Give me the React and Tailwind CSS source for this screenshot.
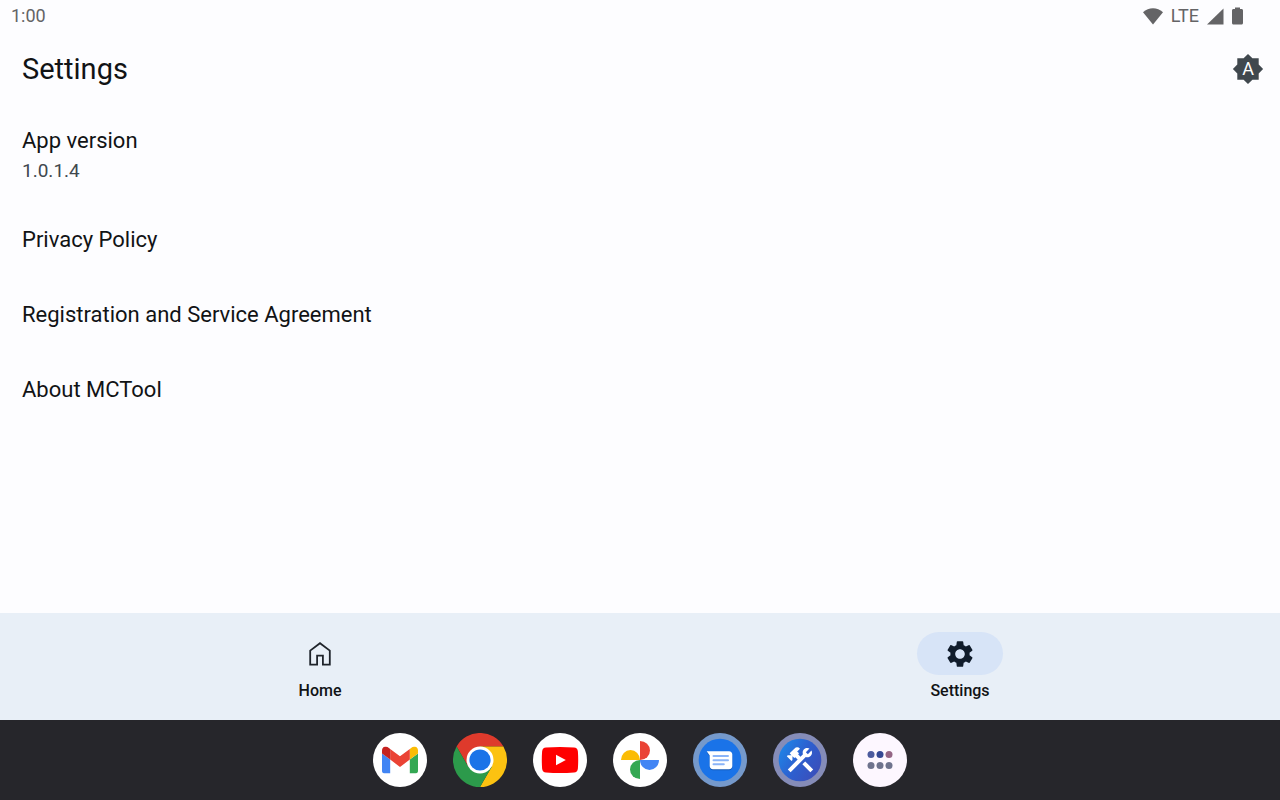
import React from 'react';
import { MdConstruction, MdSettings } from 'react-icons/md';

const links = ['Privacy Policy', 'Registration and Service Agreement', 'About MCTool'];

const StatusBar = () => (
    <div className="flex h-8 items-center justify-between pl-[11px] pr-9 text-[#646466]">
        <span className="text-lg leading-8">1:00</span>
        <div className="flex items-center gap-2">
            <svg width="20" height="17" viewBox="0 0 20 17" fill="currentColor" aria-hidden="true">
                <path d="M0 4.2C3 1.6 6.3 0.3 10 0.3s7 1.3 10 3.9L10 16.6z" />
            </svg>
            <span className="text-lg leading-8">LTE</span>
            <svg width="17" height="17" viewBox="0 0 17 17" fill="currentColor" aria-hidden="true">
                <path d="M16.5 0.5v16H0z" />
            </svg>
            <svg width="12" height="18" viewBox="0 0 12 18" fill="currentColor" aria-hidden="true">
                <path d="M3 2V0.500h5V2h1.500c0.900 0 1.500 0.600 1.500 1.500v12.500c0 0.900-0.600 1.500-1.500 1.500h-8C0.600 17.500 0 16.900 0 16V3.500C0 2.600 0.600 2 1.500 2z" />
            </svg>
        </div>
    </div>
);

const BrightnessIcon = () => (
    <svg width="32" height="32" viewBox="0 0 32 32" aria-hidden="true">
        <path fill="#40484e" d="M26.700 11.600V5.300h-6.300L16 0.900l-4.400 4.400H5.300v6.300L0.900 16l4.400 4.400v6.300h6.300l4.400 4.400 4.400-4.400h6.300v-6.300l4.400-4.400z" />
        <text x="16" y="22" textAnchor="middle" fontSize="18" fill="#fff">A</text>
    </svg>
);

const HomeIcon = () => (
    <svg width="24" height="26" viewBox="0 0 24 26" fill="none" stroke="#1f242b" strokeWidth="1.8" aria-hidden="true">
        <path d="M2.200 23.700V9.600L12 2.200l9.800 7.400v14.100h-6.900v-9H9.100v9z" />
    </svg>
);

const Gmail = () => (
    <svg width="54" height="54" viewBox="0 0 54 54" aria-hidden="true">
        <circle cx="27" cy="27" r="27" fill="#fff" />
        <svg x="9" y="13.500" width="36" height="27" viewBox="52 42 88 66">
            <path fill="#4285f4" d="M58 108h14V74L52 59v43c0 3.320 2.690 6 6 6" />
            <path fill="#34a853" d="M120 108h14c3.320 0 6-2.690 6-6V59l-20 15" />
            <path fill="#fbbc04" d="M120 48v26l20-15v-8c0-7.420-8.470-11.650-14.400-7.200" />
            <path fill="#ea4335" d="M72 74V48l24 18 24-18v26L96 92" />
            <path fill="#c5221f" d="M52 51v8l20 15V48l-5.600-4.200c-5.940-4.450-14.400-.22-14.400 7.200" />
        </svg>
    </svg>
);

const Chrome = () => (
    <svg width="54" height="54" viewBox="-27 -27 54 54" aria-hidden="true">
        <path fill="#de3a2c" d="M-23.400-13.500A27 27 0 0 1 23.400-13.500H0L0 0l-11.700 6.750z" />
        <path fill="#fcc211" d="M23.400-13.500A27 27 0 0 1 0 27L11.700 6.750 0 0v-13.500z" />
        <path fill="#2c9a4b" d="M0 27A27 27 0 0 1-23.400-13.500L-11.700 6.750 0 0l11.700 6.750z" />
        <circle r="13.500" fill="#fff" />
        <circle r="10.600" fill="#1a73e8" />
    </svg>
);

const YouTube = () => (
    <svg width="54" height="54" viewBox="-27 -27 54 54" aria-hidden="true">
        <circle r="27" fill="#fff" />
        <path fill="#f00" d="M-14-12.500Q0-13.500 14-12.500 17.500-12.300 17.900-8.500 18.500 0 17.900 8.500 17.500 12.300 14 12.600 0 13.600-14 12.600-17.500 12.300-17.900 8.500-18.500 0-17.900-8.500-17.500-12.300-14-12.500z" />
        <path fill="#fff" d="M-4-5.200L5.800 0-4 5.300z" />
    </svg>
);

const Photos = () => (
    <svg width="54" height="54" viewBox="-27 -27 54 54" aria-hidden="true">
        <circle r="27" fill="#fff" />
        <path fill="#ea4335" d="M0 0v-19a10 9.500 0 0 1 0 19z" />
        <path fill="#fbbc04" d="M0 0h-19a9.500 10 0 0 1 19 0z" />
        <path fill="#34a853" d="M0 0v19a10 9.500 0 0 1 0-19z" />
        <path fill="#4285f4" d="M0 0h19a9.500 10 0 0 1-19 0z" />
    </svg>
);

const Messages = () => (
    <svg width="54" height="54" viewBox="-27 -27 54 54" aria-hidden="true">
        <circle r="27" fill="#7599cb" />
        <circle r="21.300" fill="#1a73e8" />
        <path fill="#1558b5" d="M-13.300-7.700H9c2 0 3.300 1.300 3.300 3.200V7c0 2-1.300 3.200-3.300 3.200H-7c-2 0-3.300-1.300-3.300-3.200V-3.500z" />
        <path fill="#fff" d="M-13.300-8.700H9c2 0 3.300 1.300 3.300 3.200V6c0 2-1.300 3.200-3.300 3.200H-7c-2 0-3.300-1.300-3.300-3.200V-4.500z" />
        <path stroke="#8ab4f8" strokeWidth="2" strokeLinecap="round" d="M-6.500-4H8M-6.500 0.200H8M-6.500 4.300H3.800" />
    </svg>
);

const Toolbox = () => (
    <svg width="54" height="54" viewBox="-27 -27 54 54" aria-hidden="true">
        <defs>
            <linearGradient id="toolbox" x1="0" y1="0.200" x2="1" y2="0.800">
                <stop offset="0" stopColor="#1f86e8" />
                <stop offset="0.500" stopColor="#2d5fcf" />
                <stop offset="1" stopColor="#3c4db8" />
            </linearGradient>
        </defs>
        <circle r="27" fill="#858cb8" />
        <circle r="21.300" fill="url(#toolbox)" />
        <MdConstruction x="-16" y="-16" size={32} color="#fff" />
    </svg>
);

const AllApps = () => (
    <svg width="54" height="54" viewBox="-27 -27 54 54" aria-hidden="true">
        <circle r="27" fill="#fdf7ff" />
        <circle cx="-9" cy="-5.400" r="3.500" fill="#4c5b9e" />
        <circle cx="0" cy="-5.400" r="3.500" fill="#344893" />
        <circle cx="9" cy="-5.400" r="3.500" fill="#946585" />
        <circle cx="-9" cy="5.600" r="3.500" fill="#6e738d" />
        <circle cx="0" cy="5.600" r="3.500" fill="#6e738d" />
        <circle cx="9" cy="5.600" r="3.500" fill="#6e738d" />
    </svg>
);

const dock = [
    { name: 'Gmail', Icon: Gmail },
    { name: 'Chrome', Icon: Chrome },
    { name: 'YouTube', Icon: YouTube },
    { name: 'Photos', Icon: Photos },
    { name: 'Messages', Icon: Messages },
    { name: 'MCTool', Icon: Toolbox },
    { name: 'All apps', Icon: AllApps },
];

const App = () => {
    return (
        <div className="flex min-h-screen flex-col bg-[#fdfdff] font-['Roboto',sans-serif] text-[#111315]">
            <StatusBar />
            <header className="flex h-[74px] items-center justify-between pl-[22px] pr-4">
                <h1 className="text-[29px] leading-9">Settings</h1>
                <button aria-label="Automatic brightness">
                    <BrightnessIcon />
                </button>
            </header>

            <main className="flex-1">
                <ul>
                    <li className="h-24 px-[22px] pt-[19px]">
                        <p className="text-[22px] leading-8">App version</p>
                        <p className="text-[19px] leading-7 text-[#40484e]">1.0.1.4</p>
                    </li>
                    {links.map((label) => (
                        <li key={label}>
                            <a href="#" className="flex h-[75px] items-center px-[22px] text-[22px] leading-8">{label}</a>
                        </li>
                    ))}
                </ul>
            </main>

            <nav className="grid h-[107px] grid-cols-2 bg-[#e8eff7] pt-[19px] text-base font-medium">
                <button className="flex flex-col items-center gap-1">
                    <span className="flex h-[43px] w-[86px] items-center justify-center">
                        <HomeIcon />
                    </span>
                    Home
                </button>
                <button className="flex flex-col items-center gap-1" aria-current="page">
                    <span className="flex h-[43px] w-[86px] items-center justify-center rounded-full bg-[#d7e4f7] text-[#101c2b]">
                        <MdSettings size={32} />
                    </span>
                    Settings
                </button>
            </nav>

            <footer className="flex h-20 items-center justify-center gap-[26px] bg-[#26262b]">
                {dock.map(({ name, Icon }) => (
                    <button key={name} aria-label={name}>
                        <Icon />
                    </button>
                ))}
            </footer>
        </div>
    );
};

export default App;
